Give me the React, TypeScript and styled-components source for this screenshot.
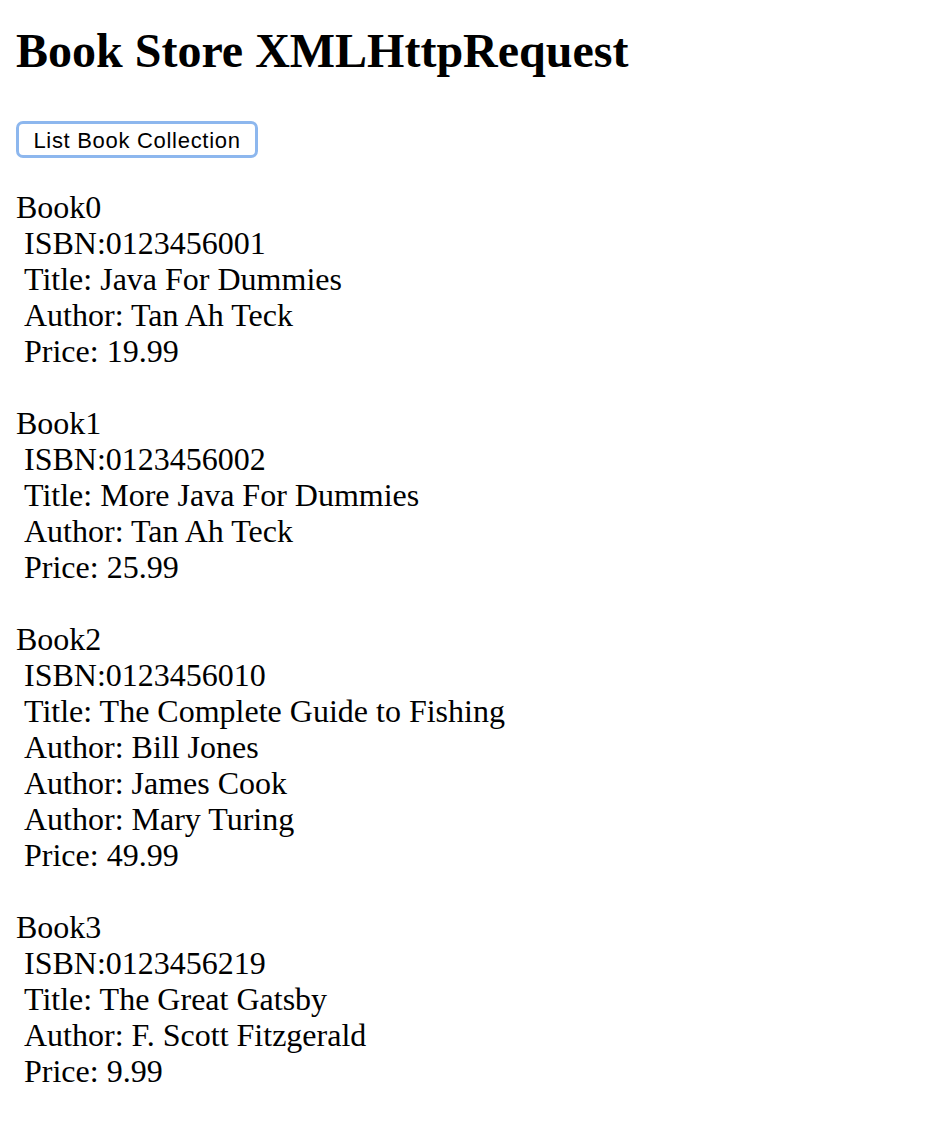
import React from "react";
import styled, { createGlobalStyle } from "styled-components";

const Global = createGlobalStyle`
  html, body { margin: 0; padding: 0; background: #fff; }
  body { font-family: "Liberation Serif", "Times New Roman", serif; color: #000; }
`;

const Page = styled.div`
  padding: 24px 16px 16px 16px;
`;

const Title = styled.h1`
  margin: 0;
  font-family: "Liberation Serif", "Times New Roman", serif;
  font-weight: bold;
  font-size: 48px;
  line-height: 53px;
`;

const ListButton = styled.button`
  margin-top: 44px;
  display: block;
  box-sizing: border-box;
  width: 242px;
  height: 37px;
  padding: 2px 0 0 0;
  background: #fff;
  border: 3px solid #8db7ee;
  border-radius: 7px;
  font-family: "Liberation Sans", Arial, sans-serif;
  font-size: 22px;
  letter-spacing: 0.7px;
  color: #000;
  text-align: center;
`;

const Output = styled.div`
  margin-top: 31px;
  font-size: 32px;
  line-height: 36px;
`;

const Book = styled.div`
  margin-bottom: 36px;
`;

const Line = styled.div<{ $indent?: boolean }>`
  padding-left: ${(p) => (p.$indent ? "8px" : "0")};
`;

type BookData = { isbn: string; title: string; authors: string[]; price: string };

const books: BookData[] = [
  { isbn: "0123456001", title: "Java For Dummies", authors: ["Tan Ah Teck"], price: "19.99" },
  { isbn: "0123456002", title: "More Java For Dummies", authors: ["Tan Ah Teck"], price: "25.99" },
  {
    isbn: "0123456010",
    title: "The Complete Guide to Fishing",
    authors: ["Bill Jones", "James Cook", "Mary Turing"],
    price: "49.99",
  },
  { isbn: "0123456219", title: "The Great Gatsby", authors: ["F. Scott Fitzgerald"], price: "9.99" },
];

export default function App() {
  return (
    <>
      <Global />
      <Page>
        <Title>Book Store XMLHttpRequest</Title>
        <ListButton>List Book Collection</ListButton>
        <Output>
          {books.map((b, i) => (
            <Book key={i}>
              <Line>Book{i}</Line>
              <Line $indent>ISBN:{b.isbn}</Line>
              <Line $indent>Title: {b.title}</Line>
              {b.authors.map((a) => (
                <Line $indent key={a}>Author: {a}</Line>
              ))}
              <Line $indent>Price: {b.price}</Line>
            </Book>
          ))}
        </Output>
      </Page>
    </>
  );
}
